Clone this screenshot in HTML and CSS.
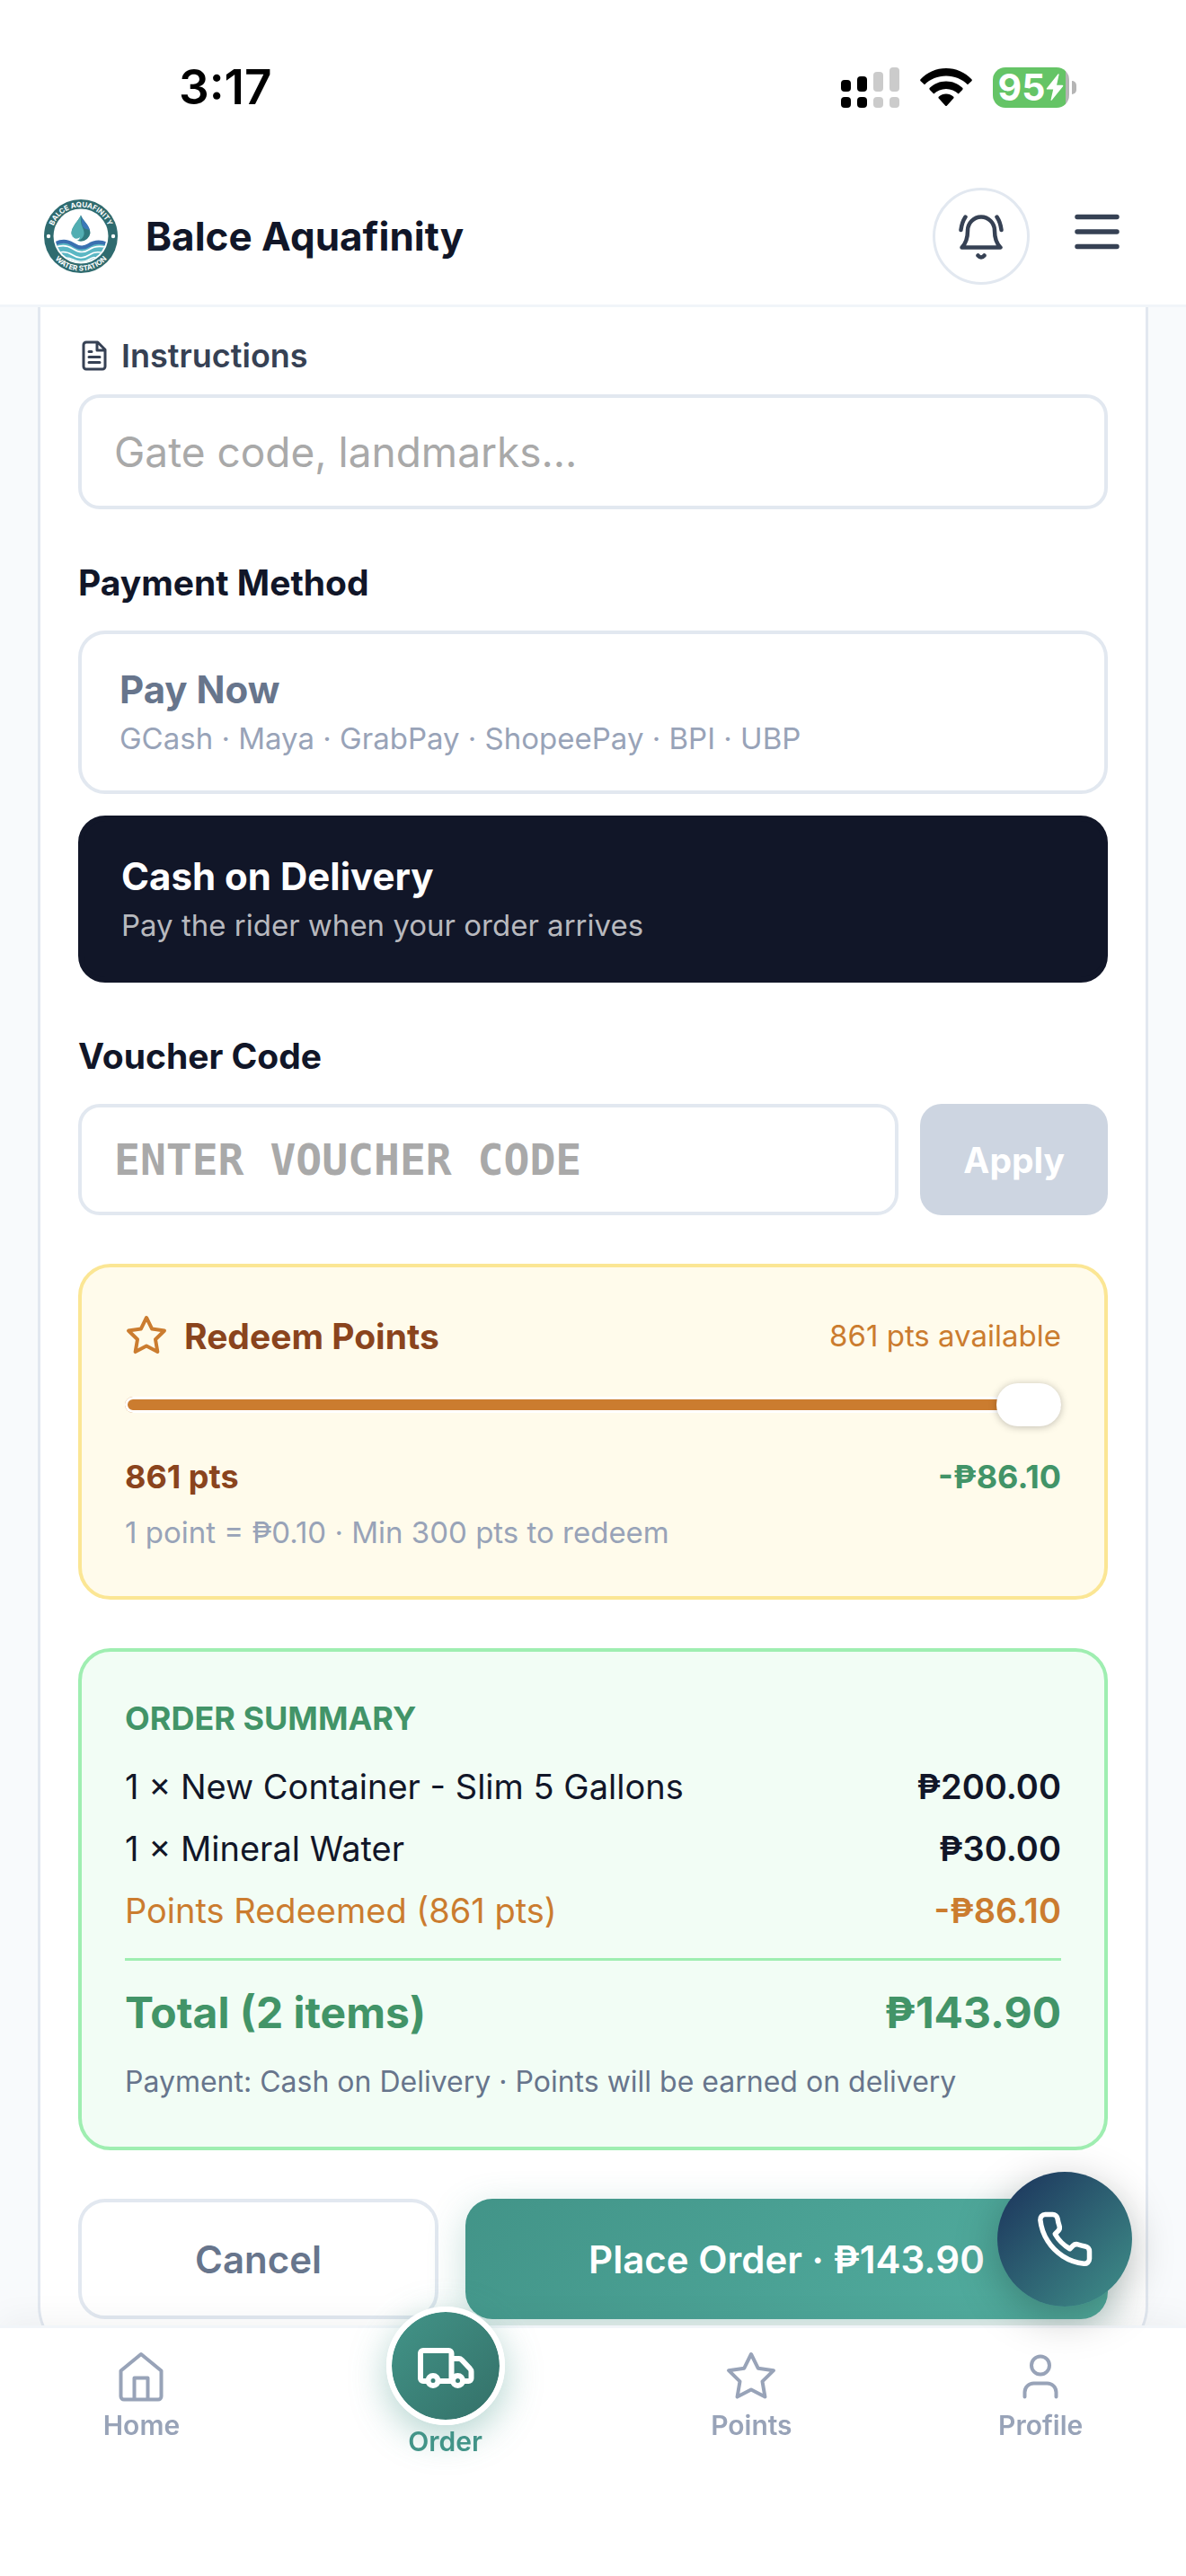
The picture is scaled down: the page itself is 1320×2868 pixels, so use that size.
FILE: index.html
```html
<!DOCTYPE html>
<html lang="en">
<head>
  <meta charset="utf-8">
  <meta name="viewport" content="width=device-width, initial-scale=1">
  <title>Balce Aquafinity</title>
  <link rel="stylesheet" href="styles.css">
</head>
<body>

  <header class="header">
    <div class="status">
      <span class="status-time">3:17</span>
      <div class="status-icons">
        <svg class="signal" viewBox="0 0 65 45" aria-hidden="true">
          <rect x="0" y="14" width="11" height="13" rx="4"/>
          <rect x="18" y="10" width="11" height="17" rx="4"/>
          <rect x="0" y="33" width="11" height="12" rx="4"/>
          <rect x="18" y="33" width="11" height="12" rx="4"/>
          <g fill="#cbcbcb">
            <rect x="36" y="5" width="11" height="22" rx="4"/>
            <rect x="54" y="0" width="11" height="27" rx="4"/>
            <rect x="36" y="33" width="11" height="12" rx="4"/>
            <rect x="54" y="33" width="11" height="12" rx="4"/>
          </g>
        </svg>
        <svg class="wifi" viewBox="0 0 58 42" aria-hidden="true">
          <path d="M29 0C18 0 8 4.500 .6 12.200a1.500 1.500 0 0 0 0 2L5 18.300C11.300 12 19.800 8.500 29 8.500S46.700 12 53 18.300l4.400-4.100a1.500 1.500 0 0 0 0-2C50 4.500 40 0 29 0z"/>
          <path d="M29 14.500c-7 0-13.400 2.800-18.200 7.300a1.500 1.500 0 0 0 0 2.100l4.500 4.500C18.900 25 23.700 22.900 29 22.900s10.100 2.100 13.700 5.500l4.500-4.500a1.500 1.500 0 0 0 0-2.100C42.400 17.300 36 14.500 29 14.500z"/>
          <path d="M29 28.600c-3 0-5.800 1.100-8 3a1.500 1.500 0 0 0 0 2.200l7 7.600a1.400 1.400 0 0 0 2 0l7-7.600a1.500 1.500 0 0 0 0-2.200c-2.200-1.900-5-3-8-3z"/>
        </svg>
        <div class="battery">
          <span>95</span>
          <svg class="bolt" viewBox="0 0 20 30" aria-hidden="true"><path d="M13.500.6 1 16.200c-.6.800-.2 1.400.7 1.400h6.500L5.600 29c-.2.900.5 1.200 1.100.5L19 14.200c.6-.8.200-1.400-.7-1.400h-6.200L14.600 1.100c.2-.9-.5-1.200-1.100-.5z"/></svg>
        </div>
      </div>
    </div>
    <div class="topbar">
      <a class="brand" href="#">
        <svg class="logo" viewBox="0 0 84 84" aria-hidden="true">
          <defs>
            <path id="arc-top" d="M9.500 42a32.500 32.500 0 0 1 65 0"/>
            <path id="arc-bottom" d="M3.500 42a38.500 38.500 0 0 0 77 0"/>
            <clipPath id="waves"><circle cx="42" cy="42" r="28.500"/></clipPath>
          </defs>
          <circle cx="42" cy="42" r="41" fill="#2f6b6f"/>
          <circle cx="42" cy="42" r="30.500" fill="#fff"/>
          <g class="logo-text">
            <text><textPath href="#arc-top" startOffset="50%">BALCE AQUAFINITY</textPath></text>
            <text><textPath href="#arc-bottom" startOffset="50%">WATER STATION</textPath></text>
          </g>
          <circle cx="6" cy="42" r="2.200" fill="#fff"/>
          <circle cx="78" cy="42" r="2.200" fill="#fff"/>
          <path d="M42 18.500c-3 7-10.500 13-10.500 20a10.600 10.600 0 0 0 21 0c0-7-7.500-13-10.500-20z" fill="#2f7a7e"/>
          <path d="M42 18.500c1 6 8.500 9 10 17-3-1.500-6-1-8.500-5z" fill="#3a78b8"/>
          <path d="M42 18.500c-3 7-10.500 13-10.500 20 0 4 2.500 7 6 8 5 0 8.500-4 8-9-.4-5-4.500-7-3.500-19z" fill="#52aeb2"/>
          <path d="M32 40c1 5 6 6 9 3-1 4-4 4.500-5.500 3.800C33 45 32 42.500 32 40z" fill="#fff"/>
          <g clip-path="url(#waves)" fill="none">
            <path d="M12 51c9-5 15-4 21 0s12 5 18 1 12-5 21-1v26H12z" fill="#5bb7c4"/>
            <path d="M12 51c9-5 15-4 21 0s12 5 18 1 12-5 21-1" stroke="#3a70b0" stroke-width="4"/>
            <path d="M12 55c9-4 15-3 21 1s12 5 18 1 12-5 21-2M15 61c7-3 12-2 18 2s12 4 18 0 11-4 16-2M20 67c6-2 9-1 13 1s12 4 18 0 6-2 12-1" stroke="#fff" stroke-width="1.600"/>
          </g>
        </svg>
        <span>Balce Aquafinity</span>
      </a>
      <div class="topbar-actions">
        <button class="bell" type="button" aria-label="Notifications">
          <svg class="icon icon-lg" viewBox="0 0 66 66" stroke-width="4.500">
            <path d="M18 27a15 15.500 0 0 1 30 0c0 8 3 15 6.500 18.500h-43C15 42 18 35 18 27z"/>
            <path d="M29.500 54.500q3.500 4 7 0M15.500 11.500q-4 6-5 14.500M50.500 11.500q4 6 5 14.500"/>
          </svg>
        </button>
        <button class="menu" type="button" aria-label="Menu">
          <svg class="icon icon-lg" viewBox="0 0 24 24" stroke-width="2"><path d="M4 6h16M4 12h16M4 18h16"/></svg>
        </button>
      </div>
    </div>
  </header>

  <main class="page">
    <form class="card">

      <div class="field">
        <label class="field-label" for="instructions">
          <svg class="icon icon-xs" viewBox="0 0 24 24" stroke-width="2"><path d="M14.500 2H6a2 2 0 0 0-2 2v16a2 2 0 0 0 2 2h12a2 2 0 0 0 2-2V7.500zM14 2v6h6M16 13H8M16 17H8M10 9H8"/></svg>
          Instructions
        </label>
        <input class="input" type="text" id="instructions" placeholder="Gate code, landmarks...">
      </div>

      <section>
        <h2 class="heading">Payment Method</h2>
        <div class="options">
          <button class="option" type="button" aria-pressed="false">
            <span class="option-title">Pay Now</span>
            <span class="option-text">GCash · Maya · GrabPay · ShopeePay · BPI · UBP</span>
          </button>
          <button class="option option-active" type="button" aria-pressed="true">
            <span class="option-title">Cash on Delivery</span>
            <span class="option-text">Pay the rider when your order arrives</span>
          </button>
        </div>
      </section>

      <section>
        <label class="heading" for="voucher">Voucher Code</label>
        <div class="voucher">
          <input class="input input-code" type="text" id="voucher" placeholder="Enter voucher code">
          <button class="apply" type="button">Apply</button>
        </div>
      </section>

      <section class="panel points">
        <div class="row points-head">
          <label class="points-title" for="points">
            <svg class="icon icon-sm" viewBox="0 0 24 24" stroke-width="2"><path d="M12 2l3.090 6.260L22 9.270l-5 4.870 1.180 6.880L12 17.770l-6.180 3.250L7 14.140 2 9.270l6.910-1.010z"/></svg>
            Redeem Points
          </label>
          <span class="points-available">861 pts available</span>
        </div>
        <input class="slider" type="range" id="points" min="0" max="861" value="861">
        <div class="row points-values">
          <span>861 pts</span>
          <span class="green">-₱86.10</span>
        </div>
        <p class="note">1 point = ₱0.10 · Min 300 pts to redeem</p>
      </section>

      <section class="panel summary">
        <h2 class="summary-title">ORDER SUMMARY</h2>
        <div class="row"><span>1 × New Container - Slim 5 Gallons</span><b>₱200.00</b></div>
        <div class="row"><span>1 × Mineral Water</span><b>₱30.00</b></div>
        <div class="row row-points"><span>Points Redeemed (861 pts)</span><b>-₱86.10</b></div>
        <div class="row row-total"><span>Total (2 items)</span><span>₱143.90</span></div>
        <p class="note">Payment: Cash on Delivery · Points will be earned on delivery</p>
      </section>

      <div class="actions">
        <button class="btn btn-cancel" type="button">Cancel</button>
        <button class="btn btn-order" type="button">Place Order · ₱143.90</button>
      </div>
    </form>
  </main>

  <nav class="nav">
    <a class="nav-item" href="#">
      <svg class="icon icon-md" viewBox="0 0 60 60" stroke-width="4"><path d="M30 5 7.500 23.500V52a3.500 3.500 0 0 0 3.500 3.500h38a3.500 3.500 0 0 0 3.500-3.500V23.500zM22.500 55.500V31.500h15v24"/></svg>
      Home
    </a>
    <a class="nav-item nav-active" href="#">
      <span class="nav-circle">
        <svg class="icon icon-lg" viewBox="0 0 66 66" stroke-width="6">
          <path d="M13 50H8a3 3 0 0 1-3-3V19a3 3 0 0 1 3-3h28.500a3 3 0 0 1 3 3v31M25 50h15.500M39.500 25H48c1 0 2 .5 3 1.500l9 9.500c1 1 1.500 2 1.500 3.500V47a3 3 0 0 1-3 3H53"/>
          <circle cx="19" cy="49.500" r="5.500"/>
          <circle cx="46.500" cy="49.500" r="5.500"/>
        </svg>
      </span>
      Order
    </a>
    <a class="nav-item" href="#">
      <svg class="icon icon-md" viewBox="0 0 24 24" stroke-width="1.600"><path d="M12 2l3.090 6.260L22 9.270l-5 4.870 1.180 6.880L12 17.770l-6.180 3.250L7 14.140 2 9.270l6.910-1.010z"/></svg>
      Points
    </a>
    <a class="nav-item" href="#">
      <svg class="icon icon-md" viewBox="0 0 60 60" stroke-width="4"><circle cx="30" cy="17.500" r="10"/><path d="M12.500 52.500V47.500a10 10 0 0 1 10-10h15a10 10 0 0 1 10 10v5"/></svg>
      Profile
    </a>
  </nav>

  <button class="call" type="button" aria-label="Call">
    <svg class="icon icon-lg" viewBox="0 0 24 24" stroke-width="2"><path d="M22 16.920v3a2 2 0 0 1-2.180 2 19.790 19.790 0 0 1-8.630-3.070 19.500 19.500 0 0 1-6-6 19.790 19.790 0 0 1-3.070-8.670A2 2 0 0 1 4.110 2h3a2 2 0 0 1 2 1.720 12.840 12.840 0 0 0 .7 2.810 2 2 0 0 1-.45 2.110L8.090 9.910a16 16 0 0 0 6 6l1.270-1.270a2 2 0 0 1 2.110-.45 12.840 12.840 0 0 0 2.810.7A2 2 0 0 1 22 16.920z"/></svg>
  </button>

</body>
</html>
```
FILE: styles.css
```css
* {
  box-sizing: border-box;
}

body {
  margin: 0;
  min-height: 100vh;
  background: #f8fafc;
  color: #111628;
  font-family: Inter, "Liberation Sans", sans-serif;
}

button,
input {
  font-family: inherit;
  margin: 0;
}

h2,
p {
  margin: 0;
}

a {
  color: inherit;
  text-decoration: none;
}

.icon {
  display: block;
  flex-shrink: 0;
  fill: none;
  stroke: currentColor;
  stroke-linecap: round;
  stroke-linejoin: round;
}
.icon-xs { width: 36px; height: 36px; }
.icon-sm { width: 48px; height: 48px; }
.icon-md { width: 60px; height: 60px; }
.icon-lg { width: 66px; height: 66px; }

.green {
  color: #429468;
}

/* header */
.header {
  position: sticky;
  top: 0;
  z-index: 2;
  background: #fff;
  border-bottom: 3px solid #f1f5f9;
}
.status {
  display: flex;
  justify-content: space-between;
  align-items: center;
  height: 186px;
  padding: 8px 122px 0 199px;
  color: #000;
}
.status-time {
  font-size: 53px;
  font-weight: 600;
}
.status-icons {
  display: flex;
  align-items: center;
  gap: 23px;
}
.signal {
  width: 65px;
  height: 45px;
}
.wifi {
  width: 58px;
  height: 42px;
}
.battery {
  position: relative;
  display: flex;
  align-items: center;
  justify-content: center;
  gap: 1px;
  width: 85px;
  height: 45px;
  margin-right: 8px;
  border-radius: 14px;
  background: linear-gradient(to right, #65c466 81px, #b5b5b5 81px);
  color: #fff;
  font-size: 41px;
  font-weight: 700;
  line-height: 45px;
}
.battery::after {
  content: "";
  position: absolute;
  right: -8px;
  top: 15px;
  width: 5px;
  height: 15px;
  border-radius: 0 6px 6px 0;
  background: #b5b5b5;
}
.bolt {
  width: 20px;
  height: 30px;
  fill: #fff;
}

.topbar {
  display: flex;
  justify-content: space-between;
  align-items: center;
  height: 153px;
  padding: 0 66px 0 48px;
}
.brand {
  display: flex;
  align-items: center;
  gap: 30px;
  font-size: 44px;
  font-weight: 700;
}
.logo {
  width: 84px;
  height: 84px;
}
.logo-text {
  fill: #fff;
  font-size: 8px;
  font-weight: 700;
  text-anchor: middle;
}
.topbar-actions {
  display: flex;
  align-items: center;
  gap: 42px;
  color: #364154;
}
.bell {
  display: flex;
  align-items: center;
  justify-content: center;
  width: 108px;
  height: 108px;
  padding: 0;
  border: 3px solid #e2e8f0;
  border-radius: 50%;
  background: #fff;
  color: inherit;
}
.menu {
  padding: 0 0 10px;
  border: 0;
  background: none;
  color: inherit;
}

/* order form */
.page {
  padding: 0 42px 180px;
}
.card {
  display: flex;
  flex-direction: column;
  gap: 54px;
  padding: 33px 42px 42px;
  border: 3px solid #e2e8f0;
  border-top: 0;
  border-radius: 0 0 60px 60px;
  background: #fff;
}
.field-label {
  display: flex;
  align-items: center;
  gap: 12px;
  margin-bottom: 22px;
  color: #364154;
  font-size: 36px;
  font-weight: 600;
  line-height: 42px;
}
.input {
  display: block;
  width: 100%;
  height: 128px;
  padding: 0 36px;
  border: 4px solid #e2e8f0;
  border-radius: 24px;
  background: #fff;
  color: #111628;
  font-size: 46px;
}
.input::placeholder {
  color: #a9a9a9;
  opacity: 1;
}
.heading {
  display: block;
  margin-bottom: 25px;
  font-size: 39px;
  font-weight: 700;
  line-height: 56px;
}
.options {
  display: flex;
  flex-direction: column;
  gap: 24px;
}
.option {
  display: flex;
  flex-direction: column;
  gap: 4px;
  padding: 35px 42px;
  border: 4px solid #e2e8f0;
  border-radius: 30px;
  background: #fff;
  color: #67758c;
  text-align: left;
}
.option-title {
  font-size: 42px;
  font-weight: 700;
  line-height: 54px;
}
.option-text {
  color: #98a3b8;
  font-size: 33px;
  line-height: 46px;
}
.option-active {
  border: 6px solid #111628;
  background: #111628;
  color: #fff;
}
.option-active .option-text {
  color: #b8b9be;
}

.voucher {
  display: flex;
  gap: 24px;
}
.input-code {
  flex: 1;
  min-width: 0;
  height: 124px;
  font-family: "DejaVu Sans Mono", monospace;
  font-size: 48px;
  font-weight: 700;
  text-transform: uppercase;
}
.apply {
  padding: 0 48px;
  border: 0;
  border-radius: 24px;
  background: #cdd5e1;
  color: #fff;
  font-size: 39px;
  font-weight: 700;
}

.row {
  display: flex;
  justify-content: space-between;
  align-items: center;
}
.panel {
  padding: 48px;
  border: 4px solid;
  border-radius: 36px;
}
.note {
  font-size: 32px;
}

.points {
  border-color: #fbe694;
  background: #fffbeb;
  color: #8a441d;
}
.points-head {
  height: 56px;
}
.points-title {
  display: flex;
  align-items: center;
  gap: 18px;
  font-size: 39px;
  font-weight: 700;
}
.points-title .icon,
.points-available {
  color: #cb7c2f;
}
.points-available {
  font-size: 33px;
}
.slider {
  -webkit-appearance: none;
  appearance: none;
  display: block;
  width: 100%;
  height: 48px;
  margin: 25px 0 32px;
  background: none;
}
.slider::-webkit-slider-runnable-track {
  height: 18px;
  border-radius: 9px;
  background: #cb7c2f;
  box-shadow: inset 0 0 0 3px #fff;
}
.slider::-webkit-slider-thumb {
  -webkit-appearance: none;
  width: 72px;
  height: 48px;
  margin-top: -15px;
  border-radius: 24px;
  background: #fff;
  box-shadow: 0 1px 8px rgba(0, 0, 0, .25);
}
.points-values {
  font-size: 36px;
  font-weight: 700;
  line-height: 48px;
}
.points .note {
  margin-top: 15px;
  color: #98a3b8;
  font-size: 33px;
  line-height: 46px;
}

.summary {
  border-color: #9feeb1;
  background: #f2fdf5;
  font-size: 38px;
}
.summary-title {
  margin-bottom: 22px;
  color: #429468;
  font-size: 36px;
  font-weight: 700;
  line-height: 52px;
}
.summary .row {
  margin-bottom: 12px;
  line-height: 57px;
}
.summary b {
  font-weight: 600;
}
.row-points {
  color: #cb7c2f;
}
.summary .row-total {
  margin: 24px 0 19px;
  padding-top: 24px;
  border-top: 3px solid #9feeb1;
  color: #429468;
  font-size: 48px;
  font-weight: 700;
  line-height: 68px;
}
.summary .note {
  color: #67758c;
  line-height: 48px;
}

.actions {
  display: grid;
  grid-template-columns: 401fr 715fr;
  gap: 30px;
}
.btn {
  height: 134px;
  padding: 0;
  border: 0;
  border-radius: 30px;
  font-size: 42px;
  font-weight: 600;
}
.btn-cancel {
  border: 4px solid #e2e8f0;
  background: #fff;
  color: #67758c;
}
.btn-order {
  background: linear-gradient(135deg, #429488, #53afa1);
  box-shadow: 0 12px 42px rgba(66, 148, 136, .3);
  color: #fff;
}

/* bottom navigation */
.nav {
  position: fixed;
  left: 0;
  right: 0;
  bottom: 0;
  display: flex;
  justify-content: space-around;
  align-items: flex-start;
  padding: 24px 0 132px;
  border-top: 3px solid #f1f5f9;
  background: #fff;
  box-shadow: 0 -6px 36px rgba(0, 0, 0, .05);
}
.nav-item {
  display: flex;
  flex-direction: column;
  align-items: center;
  gap: 6px;
  color: #98a3b8;
  font-size: 30px;
  font-weight: 600;
  line-height: 36px;
}
.nav-active {
  gap: 0;
  margin-top: -48px;
  color: #429488;
}
.nav-circle {
  display: flex;
  align-items: center;
  justify-content: center;
  width: 132px;
  height: 132px;
  border: 6px solid #fff;
  border-radius: 50%;
  background: linear-gradient(135deg, #429488, #347068) padding-box;
  box-shadow: 0 12px 42px rgba(66, 148, 136, .4);
  color: #fff;
}

.call {
  position: fixed;
  right: 60px;
  bottom: 300px;
  display: flex;
  align-items: center;
  justify-content: center;
  width: 150px;
  height: 150px;
  padding: 0;
  border: 0;
  border-radius: 50%;
  background: linear-gradient(135deg, #1e3a5f 10%, #40918a);
  box-shadow: 0 12px 48px rgba(0, 0, 0, .25);
  color: #fff;
}
```
